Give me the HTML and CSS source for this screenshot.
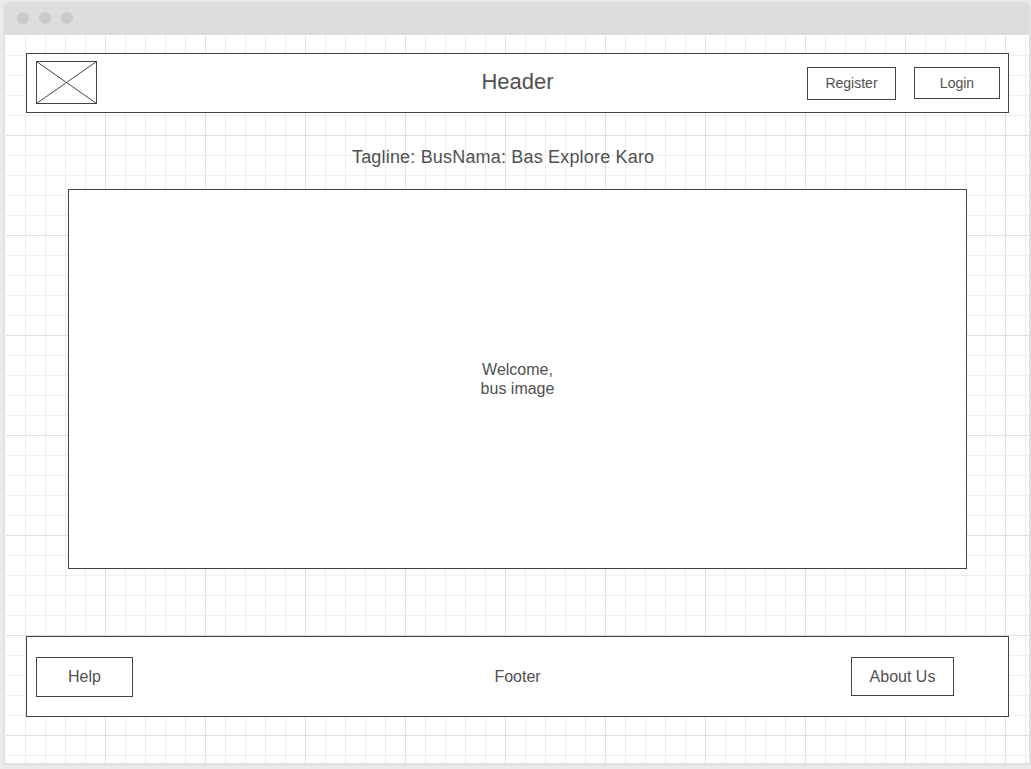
FILE: index.html
```html
<!DOCTYPE html>
<html lang="en">
<head>
<meta charset="utf-8">
<title>BusNama</title>
<link rel="stylesheet" href="styles.css">
</head>
<body>
<div class="window">
  <div class="titlebar"><i class="dot"></i><i class="dot"></i><i class="dot"></i></div>
  <div class="canvas">
    <header class="box header">
      <svg class="logo" width="61" height="43" viewBox="0 0 61 43" fill="none" stroke="#434343">
        <rect x=".5" y=".5" width="60" height="42"/>
        <path d="M.5 .5L60.5 42.5M60.5 .5L.5 42.5"/>
      </svg>
      <h1 class="title">Header</h1>
      <nav class="actions">
        <button class="box button register">Register</button>
        <button class="box button login">Login</button>
      </nav>
    </header>
    <p class="tagline">Tagline: BusNama: Bas Explore Karo</p>
    <main class="box hero">Welcome,<br>bus image</main>
    <footer class="box footer">
      <button class="box button help">Help</button>
      <span class="footer-title">Footer</span>
      <button class="box button about">About Us</button>
    </footer>
  </div>
</div>
</body>
</html>
```
FILE: styles.css
```css
* { box-sizing: border-box; }
body {
  margin: 0;
  height: 769px;
  padding: 2px 1px 4px 4px;
  overflow: hidden;
  background: #ebebeb;
  color: #505050;
  font: 16px/19px "Liberation Sans", Arial, sans-serif;
}
.window {
  height: 762px;
  overflow: hidden;
  border-radius: 6px 6px 0 0;
  background: #ddd;
  box-shadow: 0 1px 3px rgba(0, 0, 0, .06);
}
.titlebar {
  display: flex;
  gap: 10px;
  height: 33px;
  padding: 10px 13px;
}
.dot {
  width: 12px;
  height: 12px;
  border-radius: 50%;
  background: #cacaca;
}
.canvas {
  display: flex;
  flex-direction: column;
  height: 729px;
  padding: 18px 20px 0 21px;
  border: solid #dedede;
  border-width: 0 1px 1px;
  background-color: #fff;
  background-image:
    linear-gradient(90deg, #dfdfdf 1px, transparent 1px),
    linear-gradient(#dfdfdf 1px, transparent 1px),
    linear-gradient(90deg, #ededed 1px, transparent 1px),
    linear-gradient(#ededed 1px, transparent 1px);
  background-size: 100px 100px, 100px 100px, 20px 20px, 20px 20px;
  box-shadow: inset 1px 1px #fff;
}
.box {
  border: 1px solid #434343;
  background: #fff;
}
.header, .footer {
  display: grid;
  grid-template-columns: 1fr auto 1fr;
}
.header {
  height: 60px;
  padding: 7px 8px 0 9px;
}
.title {
  margin: 8px 1px 0 0;
  font-size: 22px;
  line-height: 26px;
  font-weight: 400;
}
.actions {
  display: flex;
  justify-content: flex-end;
  align-items: flex-start;
  gap: 18px;
  padding-top: 6px;
}
.button {
  padding: 0;
  color: inherit;
  font: inherit;
}
.register { width: 89px; height: 33px; font-size: 14px; }
.login { width: 86px; height: 32px; font-size: 14px; }
.tagline {
  margin: 33px 0 0 326px;
  font-size: 18px;
  line-height: 22px;
  letter-spacing: .18px;
}
.hero {
  display: flex;
  align-items: center;
  justify-content: center;
  width: 899px;
  height: 380px;
  margin: 21px 0 67px 42px;
  text-align: center;
}
.footer {
  height: 81px;
  padding: 20px 54px 0 9px;
}
.footer-title { margin: 10px -45px 0 0; }
.help { width: 97px; height: 40px; padding-bottom: 1px; }
.about { justify-self: end; width: 103px; height: 39px; }
```
